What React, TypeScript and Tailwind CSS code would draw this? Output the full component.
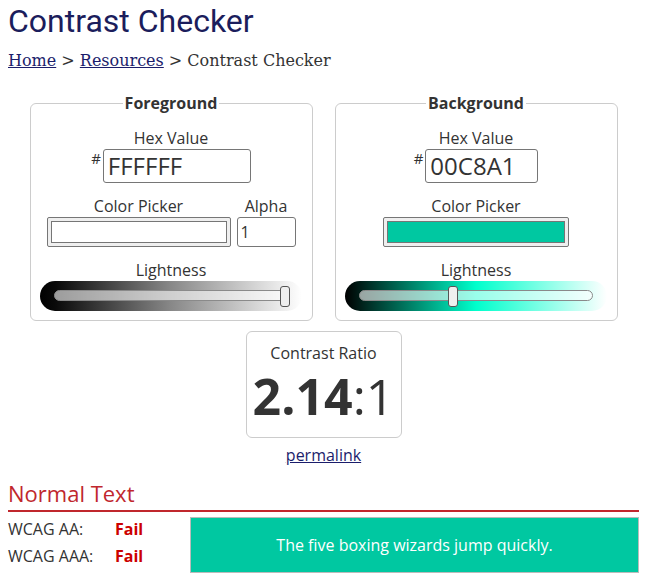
import React from 'react';

const sans = "font-['Open_Sans',sans-serif]";

const ColorSwatch = ({ color, width }: { color: string; width: number }) => (
  <div
    className="h-[30px] rounded-[2px] border border-[#767676] bg-[#efefef] p-[3px]"
    style={{ width }}
  >
    <div className="h-full w-full border border-[#767676]" style={{ background: color }} />
  </div>
);

const Lightness = ({ gradient, pos }: { gradient: string; pos: number }) => (
  <div className="flex flex-col items-center">
    <div className="text-base leading-[22px] text-[#333]">Lightness</div>
    <div
      className="relative h-[30px] w-[262px] rounded-full px-[14px] pt-[9px]"
      style={{ background: gradient }}
    >
      <div className="relative h-[11px] w-full rounded-full border border-[#8a8a8a] bg-white/60">
        <div
          className="absolute top-[-5px] h-[21px] w-[10px] rounded-[3px] border border-[#555] bg-[#efefef]"
          style={{ left: pos }}
        />
      </div>
    </div>
  </div>
);

const Panel = ({
  title,
  hex,
  hexWidth,
  color,
  alpha,
  gradient,
  pos,
}: {
  title: string;
  hex: string;
  hexWidth: number;
  color: string;
  alpha?: boolean;
  gradient: string;
  pos: number;
}) => (
  <fieldset className="h-[228px] w-[283px] rounded-[6px] border border-[#cccccc] pb-2">
    <legend className="mx-auto px-[2px] text-base font-bold leading-[20px] text-[#333]">{title}</legend>
    <div className="mt-[14px] flex flex-col items-center">
      <div className="text-base leading-[22px] text-[#333]">Hex Value</div>
      <div className="flex items-start">
        <span className="mr-[2px] mt-[1px] text-[15px] leading-[16px] text-[#333]">#</span>
        <div
          className="h-[34px] rounded-[3px] border border-[#767676] px-[4px] text-[24px] leading-[32px] text-[#333]"
          style={{ width: hexWidth }}
        >
          {hex}
        </div>
      </div>
      <div className="mt-[12px] flex items-end gap-[6px]">
        <div className="flex flex-col items-center">
          <div className="text-base leading-[22px] text-[#333]">Color Picker</div>
          <ColorSwatch color={color} width={alpha ? 184 : 186} />
        </div>
        {alpha && (
          <div className="flex flex-col items-center">
            <div className="text-base leading-[22px] text-[#333]">Alpha</div>
            <div className="h-[30px] w-[59px] rounded-[3px] border border-[#767676] px-[3px] text-base leading-[28px] text-[#333]">
              1
            </div>
          </div>
        )}
      </div>
      <div className="mt-[12px]">
        <Lightness gradient={gradient} pos={pos} />
      </div>
    </div>
  </fieldset>
);

export default function App() {
  return (
    <div className={`bg-white px-2 ${sans}`}>
      <h1 className="pt-[2px] font-['Roboto',sans-serif] text-[32px] leading-[38px] text-[#1b1d5c]">
        Contrast Checker
      </h1>
      <div className="mt-[11px] font-['DejaVu_Serif',serif] text-[16px] leading-[20px] text-[#333]">
        <a className="text-[#1b1d6b] underline">Home</a> &gt;{' '}
        <a className="text-[#1b1d6b] underline">Resources</a> &gt; Contrast Checker
      </div>

      <div className="mt-[22px] flex justify-center gap-[22px]">
        <Panel
          title="Foreground"
          hex="FFFFFF"
          hexWidth={148}
          color="#ffffff"
          alpha
          gradient="linear-gradient(to right, #000 0%, #0a0a0a 6%, #888 50%, #fff 100%)"
          pos={225}
        />
        <Panel
          title="Background"
          hex="00C8A1"
          hexWidth={113}
          color="#00c8a1"
          gradient="linear-gradient(to right, #000 0%, #002a22 8%, #00ffcc 50%, #fff 100%)"
          pos={88}
        />
      </div>

      <div className="mt-[10px] flex flex-col items-center">
        <div className="flex h-[107px] w-[156px] flex-col items-center rounded-[6px] border border-[#cccccc] pt-[10px] text-[#333]">
          <div className="text-base leading-[22px]">Contrast Ratio</div>
          <div className="mt-[2px] text-[50px] leading-[60px]">
            <span className="font-bold">2.14</span>:1
          </div>
        </div>
        <a className="mt-[5px] text-base leading-[24px] text-[#1b1d6b] underline">permalink</a>
      </div>

      <h2 className="mt-[11px] border-b-[2px] border-[#c0272d] pb-[2px] text-[22px] leading-[30px] text-[#c0272d]">
        Normal Text
      </h2>
      <div className="mt-[5px] flex items-start">
        <div className="mt-[-1px] w-[182px] text-base leading-[27px] text-[#333]">
          <div className="flex">
            <span className="w-[107px]">WCAG AA:</span>
            <span className="font-bold text-[#cc0000]">Fail</span>
          </div>
          <div className="flex">
            <span className="w-[107px]">WCAG AAA:</span>
            <span className="font-bold text-[#cc0000]">Fail</span>
          </div>
        </div>
        <div className="flex h-[56px] flex-1 items-center justify-center border border-[#bbbbbb] bg-[#00c8a1] text-base text-white">
          The five boxing wizards jump quickly.
        </div>
      </div>
    </div>
  );
}
